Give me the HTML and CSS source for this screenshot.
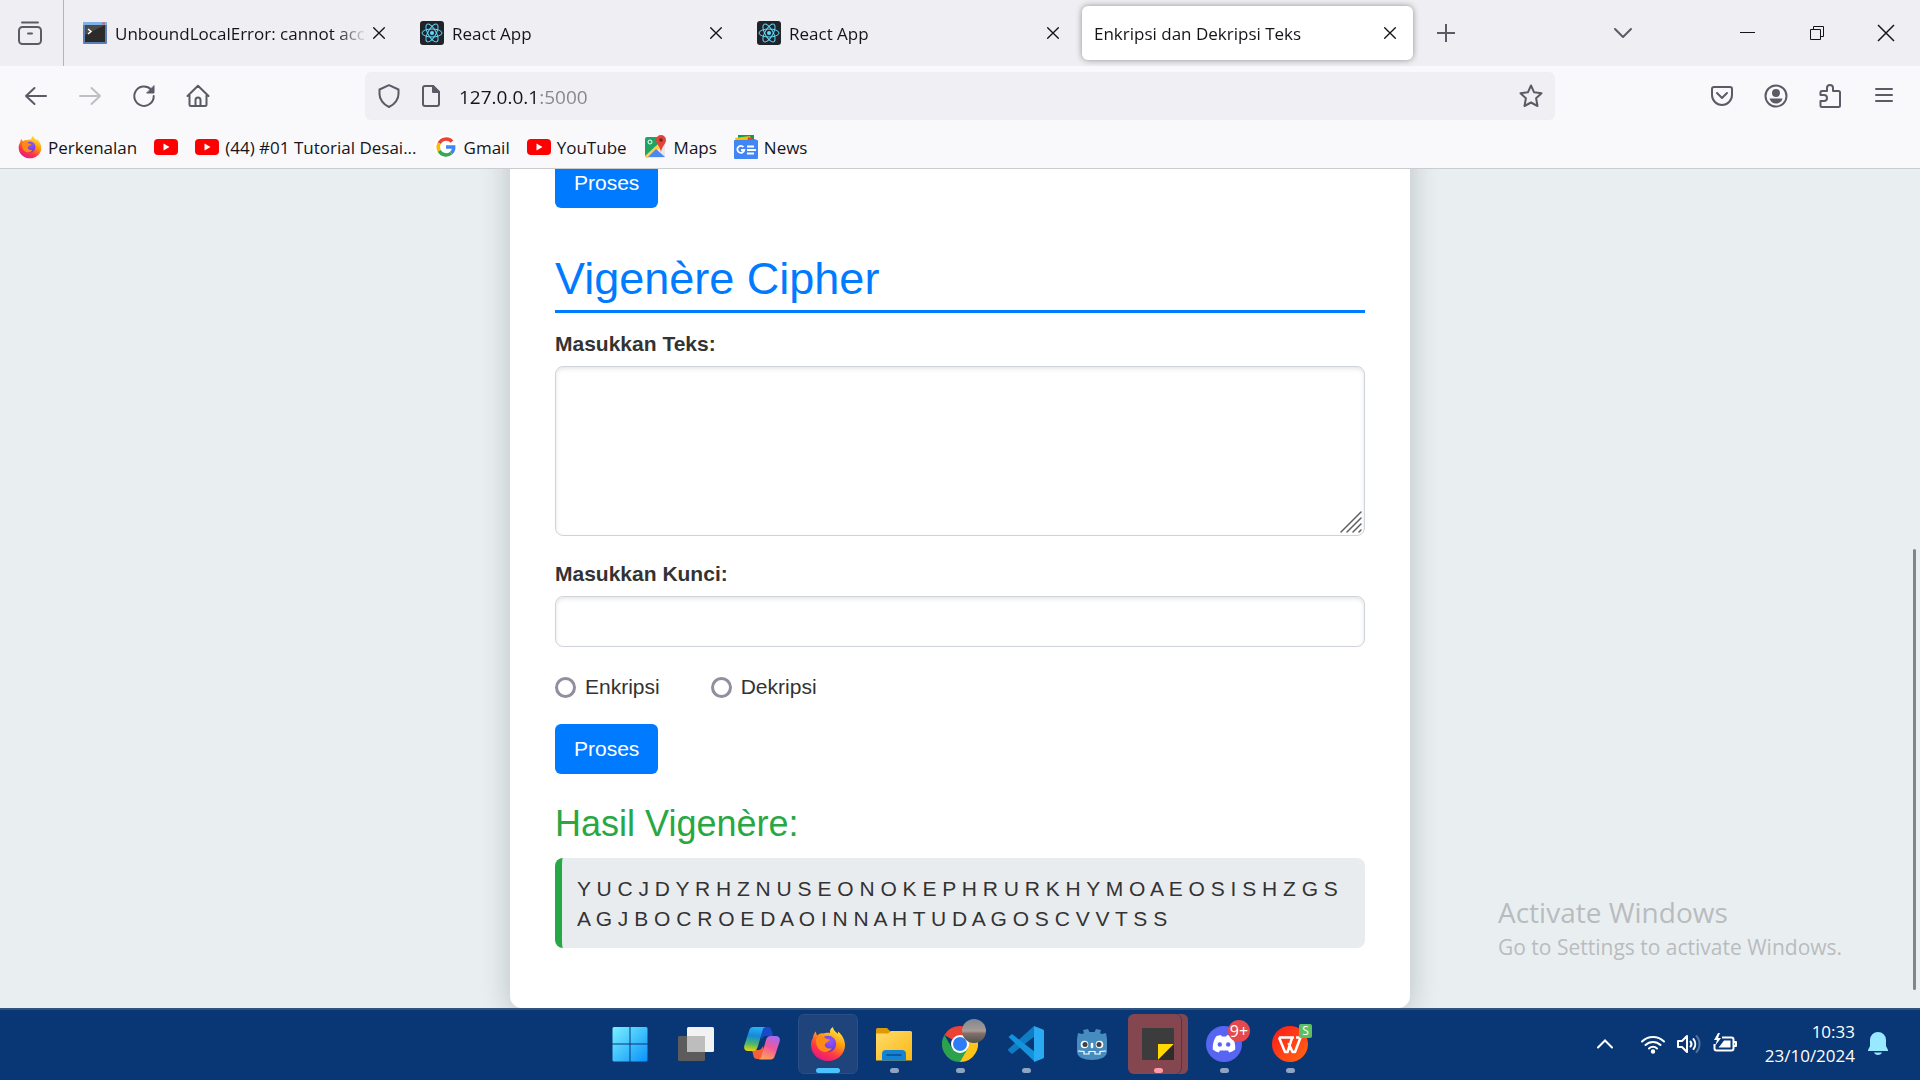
FILE: index.html
```html
<!DOCTYPE html>
<html lang="id">
<head>
<meta charset="utf-8">
<title>Enkripsi dan Dekripsi Teks</title>
<link rel="stylesheet" href="styles.css">
</head>
<body>
<svg class="defs" aria-hidden="true">
  <defs>
    <linearGradient id="fxBody" x1="0.8" y1="0" x2="0.25" y2="1"><stop offset="0" stop-color="#fff44f"/><stop offset=".4" stop-color="#ff980e"/><stop offset=".7" stop-color="#ff3647"/><stop offset="1" stop-color="#e31587"/></linearGradient>
    <radialGradient id="fxGlobe" cx=".6" cy=".3" r=".8"><stop offset="0" stop-color="#9059ff"/><stop offset=".6" stop-color="#7542e5"/><stop offset="1" stop-color="#4a2bb0"/></radialGradient>
    <linearGradient id="winBlue" gradientUnits="userSpaceOnUse" x1="0" y1="0" x2="35" y2="35"><stop offset="0" stop-color="#7df3ff"/><stop offset="1" stop-color="#0a93fa"/></linearGradient>
    <linearGradient id="copLeft" x1=".3" y1="0" x2=".2" y2="1"><stop offset="0" stop-color="#27b0f5"/><stop offset=".35" stop-color="#1489d8"/><stop offset=".7" stop-color="#4fb868"/><stop offset="1" stop-color="#f2d500"/></linearGradient>
    <linearGradient id="copRight" x1=".7" y1="0" x2=".3" y2="1"><stop offset="0" stop-color="#a46bf2"/><stop offset=".45" stop-color="#f0569c"/><stop offset="1" stop-color="#ffa255"/></linearGradient>
    <linearGradient id="folder" x1="0" y1="0" x2="1" y2="1"><stop offset="0" stop-color="#ffdc6e"/><stop offset="1" stop-color="#fbb811"/></linearGradient>
    <linearGradient id="wpsRed" x1="0" y1="0" x2="1" y2="1"><stop offset="0" stop-color="#ff1616"/><stop offset="1" stop-color="#ff6a14"/></linearGradient>
    <linearGradient id="avatar" x1="0" y1="0" x2="0" y2="1"><stop offset="0" stop-color="#7e8792"/><stop offset=".5" stop-color="#a99b95"/><stop offset=".6" stop-color="#82706a"/><stop offset="1" stop-color="#4e504f"/></linearGradient>
    <symbol id="close" viewBox="0 0 24 24"><path d="M4 4l16 16M20 4L4 20" fill="none" stroke="#15141a" stroke-width="2" stroke-linecap="round"/></symbol>
    <symbol id="react" viewBox="0 0 24 24"><rect width="24" height="24" rx="3" fill="#20232a"/><g fill="none" stroke="#61dafb" stroke-width="1"><ellipse cx="12" cy="12" rx="10" ry="4"/><ellipse cx="12" cy="12" rx="10" ry="4" transform="rotate(60 12 12)"/><ellipse cx="12" cy="12" rx="10" ry="4" transform="rotate(120 12 12)"/></g><circle cx="12" cy="12" r="2" fill="#61dafb"/></symbol>
    <symbol id="youtube" viewBox="0 0 24 24"><rect y="4" width="24" height="16" rx="4" fill="#f00"/><path d="M9.500 8.500v7l6-3.500z" fill="#fff"/></symbol>
    <symbol id="firefox" viewBox="0 0 36 36"><path d="M3 12C3 9 5 6 6 5.500c0 2 .5 3 1.500 4C9 8 11 7 13 7.500c2-.5 5-1 7-.5C19.500 4 21 2 23 1c.3 3 2 4 4 6l1 1V5.500c4 3 7 8.500 7 13.500 0 9-7.500 16-17 16S1 28 1 19c0-3 .7-5.500 2-7z" fill="url(#fxBody)"/><circle cx="18" cy="18" r="8.200" fill="url(#fxGlobe)"/><path d="M6 13c2-3 5-3.500 8-2l3 2c2 .3 2.500.5 2.500 1.200 0 1.200-3 2-4 3.200-.8 1-1 2-.2 3.200 1.200 2 3.700 2.400 6.700 1.400-2 4-7 5-10.500 3C7.500 23 5.500 18 6 13z" fill="#ff8a16"/></symbol>
  </defs>
</svg>

<header class="browser">
  <div class="tabbar">
    <button class="tool view" aria-label="Firefox View"><svg width="28" height="28" viewBox="0 0 28 28" fill="none" stroke="#5b5b66" stroke-width="2" stroke-linecap="round"><path d="M6 3.500h16"/><rect x="3" y="8" width="22" height="17" rx="3.500"/><path d="M12 14.500h4"/></svg></button>
    <div class="tabs" role="tablist">
      <div class="tab" role="tab"><svg class="fav" viewBox="0 0 24 24"><rect y="1" width="24" height="22" rx="1" fill="#5a7fb4"/><rect y="1" width="24" height="3" fill="#7fb0e8"/><rect x="2" y="4" width="20" height="17" fill="#2b2b2b"/><path d="M2 4h20L2 14z" fill="#4a4a4a"/><path d="M5 8l3 2.500L5 13" fill="none" stroke="#fff" stroke-width="1.500"/><rect x="19" y="1.500" width="3" height="2" fill="#d86a5c"/></svg><span class="tab-title">UnboundLocalError: cannot acce</span><button class="tab-close" aria-label="Close tab"><svg><use href="#close"/></svg></button></div>
      <div class="tab" role="tab"><svg class="fav"><use href="#react"/></svg><span class="tab-title">React App</span><button class="tab-close" aria-label="Close tab"><svg><use href="#close"/></svg></button></div>
      <div class="tab" role="tab"><svg class="fav"><use href="#react"/></svg><span class="tab-title">React App</span><button class="tab-close" aria-label="Close tab"><svg><use href="#close"/></svg></button></div>
      <div class="tab active" role="tab" aria-selected="true"><span class="tab-title">Enkripsi dan Dekripsi Teks</span><button class="tab-close" aria-label="Close tab"><svg><use href="#close"/></svg></button></div>
    </div>
    <button class="tool newtab" aria-label="New tab"><svg width="24" height="24" viewBox="0 0 24 24" stroke="#5b5b66" stroke-width="2"><path d="M12 3v18M3 12h18"/></svg></button>
    <button class="tool alltabs" aria-label="List all tabs"><svg width="24" height="24" viewBox="0 0 24 24" fill="none" stroke="#5b5b66" stroke-width="2" stroke-linecap="round" stroke-linejoin="round"><path d="M4 8l8 8 8-8"/></svg></button>
    <div class="window-buttons">
      <button class="tool" aria-label="Minimize"><svg width="20" height="20" viewBox="0 0 20 20"><path d="M2 9.500h15" stroke="#15141a"/></svg></button>
      <button class="tool" aria-label="Restore"><svg width="20" height="20" viewBox="0 0 20 20" fill="none" stroke="#15141a"><path d="M3.500 6.500h10v10h-10zM6.500 6.500v-3h10v10h-3"/></svg></button>
      <button class="tool" aria-label="Close"><svg width="20" height="20" viewBox="0 0 20 20" stroke="#15141a" stroke-width="1.500"><path d="M2 2l16 16M18 2L2 18"/></svg></button>
    </div>
  </div>

  <div class="navbar">
    <div class="nav-left">
      <button class="tool" aria-label="Back"><svg width="24" height="24" viewBox="0 0 24 24" fill="none" stroke="#5b5b66" stroke-width="2" stroke-linecap="round" stroke-linejoin="round"><path d="M22 12H2M10.500 4L2 12l8.500 8"/></svg></button>
      <button class="tool" aria-label="Forward" disabled><svg width="24" height="24" viewBox="0 0 24 24" fill="none" stroke="#bfbfc4" stroke-width="2" stroke-linecap="round" stroke-linejoin="round"><path d="M2 12h20M13.500 4l8.500 8-8.500 8"/></svg></button>
      <button class="tool" aria-label="Reload"><svg width="24" height="24" viewBox="0 0 24 24" fill="none" stroke="#5b5b66" stroke-width="2" stroke-linecap="round"><path d="M19 5.500A9.700 9.700 0 1 0 21.700 12"/><path d="M22 2v7h-7z" fill="#5b5b66" stroke-width="1"/></svg></button>
      <button class="tool" aria-label="Home"><svg width="24" height="24" viewBox="0 0 24 24" fill="none" stroke="#5b5b66" stroke-width="2" stroke-linecap="round" stroke-linejoin="round"><path d="M1.500 12L12 1.800 22.500 12M3.500 11v9.500a1.500 1.500 0 0 0 1.500 1.500h14a1.500 1.500 0 0 0 1.500-1.500V11M9.500 21.500V16a2.500 2.500 0 0 1 5 0v5.500"/></svg></button>
    </div>
    <div class="urlbar">
      <svg width="24" height="24" viewBox="0 0 24 24" fill="none" stroke="#5b5b66" stroke-width="2" stroke-linejoin="round"><path d="M12 1.200l9.500 4.300v4.500c0 5-3.500 10.500-9.500 13-6-2.500-9.500-8-9.500-13V5.500z"/></svg>
      <svg width="24" height="24" viewBox="0 0 24 24" fill="none" stroke="#5b5b66" stroke-width="2" stroke-linejoin="round"><path d="M14 2H6a2 2 0 0 0-2 2v16a2 2 0 0 0 2 2h12a2 2 0 0 0 2-2V8z"/><path d="M14 2v6h6z" fill="#5b5b66"/></svg>
      <input class="address" type="text" value="127.0.0.1:5000" aria-label="Address">
      <button class="tool" aria-label="Bookmark this page"><svg width="24" height="24" viewBox="0 0 24 24" fill="none" stroke="#5b5b66" stroke-width="2" stroke-linejoin="round"><path d="M12 1.500l3.100 6.800 7.400.9-5.400 5.100 1.400 7.700L12 18.500 5.500 22l1.400-7.700L1.500 9.200l7.400-.9z"/></svg></button>
    </div>
    <div class="nav-right">
      <button class="tool" aria-label="Pocket"><svg width="24" height="24" viewBox="0 0 24 24" fill="none" stroke="#5b5b66" stroke-width="2" stroke-linecap="round" stroke-linejoin="round"><path d="M4 3h16a2 2 0 0 1 2 2v6a10 10 0 0 1-20 0V5a2 2 0 0 1 2-2z"/><path d="M7 9l5 5 5-5"/></svg></button>
      <button class="tool" aria-label="Account"><svg width="24" height="24" viewBox="0 0 24 24" fill="#5b5b66"><circle cx="12" cy="12" r="10.500" fill="none" stroke="#5b5b66" stroke-width="2"/><circle cx="12" cy="9" r="4"/><path d="M5.500 14.500h13c-.8 3-3.300 5-6.500 5s-5.700-2-6.500-5z"/></svg></button>
      <button class="tool" aria-label="Extensions"><svg width="24" height="24" viewBox="0 0 24 24" fill="none" stroke="#5b5b66" stroke-width="2" stroke-linejoin="round"><path d="M9 7V4a3 3 0 0 1 6 0v3h5.500a1.500 1.500 0 0 1 1.500 1.500v13a1.500 1.500 0 0 1-1.500 1.500H4a1.500 1.500 0 0 1-1.500-1.500V17H6a3 3 0 0 0 0-6H2.500V8.500A1.500 1.500 0 0 1 4 7z"/></svg></button>
      <button class="tool" aria-label="Menu"><svg width="24" height="24" viewBox="0 0 24 24" stroke="#5b5b66" stroke-width="2" stroke-linecap="round"><path d="M4 5h16M4 11h16M4 17h16"/></svg></button>
    </div>
  </div>

  <nav class="bookmarks">
    <a href="#"><svg><use href="#firefox"/></svg>Perkenalan</a>
    <a href="#" aria-label="YouTube"><svg><use href="#youtube"/></svg></a>
    <a href="#"><svg><use href="#youtube"/></svg>(44) #01 Tutorial Desai...</a>
    <a href="#"><svg viewBox="0 0 24 24"><circle cx="12" cy="12" r="12" fill="#fff"/><g fill="none" stroke-width="3.500"><path d="M18 6.700A7.800 7.800 0 0 0 5.200 8.300" stroke="#ea4335"/><path d="M5.200 8.300a7.800 7.800 0 0 0 0 7.500" stroke="#fbbc05"/><path d="M5.200 15.800a7.800 7.800 0 0 0 12 2.200" stroke="#34a853"/><path d="M17.200 18a7.500 7.500 0 0 0 2.500-6H12" stroke="#4285f4"/></g></svg>Gmail</a>
    <a href="#"><svg><use href="#youtube"/></svg>YouTube</a>
    <a href="#"><svg viewBox="0 0 24 24"><path d="M2 3h14l5 7v11a2 2 0 0 1-2 2H2z" fill="#e8e8e8"/><path d="M1 4a2 2 0 0 1 2-2h11l3 7L2 22a2 2 0 0 1-1-2z" fill="#1fa463"/><path d="M14 9l3 3L4 23H3a2 2 0 0 1-2-2z" fill="#ffd04b"/><path d="M12 14l9 8H4z" fill="#4a89f3"/><circle cx="6" cy="7" r="2" fill="none" stroke="#fff"/><path d="M17 0a5 5 0 0 1 5 5c0 4-4 6-5 12-1-6-5-8-5-12a5 5 0 0 1 5-5z" fill="#e0443a"/><circle cx="17" cy="5" r="1.800" fill="#7b231e"/></svg>Maps</a>
    <a href="#"><svg viewBox="0 0 24 24"><path d="M4 0h16v7H4z" fill="#0c9d58"/><path d="M1 3l15-2 2 6H2z" fill="#fbbc04"/><path d="M14 2l9 3-2 5h-8z" fill="#ea4335"/><rect y="5" width="24" height="19" rx="1" fill="#4285f4"/><path d="M9.500 12a3.500 3.500 0 1 0 .8 3H7M13 11.500h7M13 15h9M13 18.500h7" stroke="#fff" stroke-width="1.800" fill="none"/></svg>News</a>
  </nav>
</header>

<main class="page">
  <div class="card">
    <form class="form">
      <button class="btn" type="button">Proses</button>
    </form>
    <h2>Vigenère Cipher</h2>
    <form class="form">
      <label class="field-label" for="teks">Masukkan Teks:</label>
      <div class="area-wrap">
        <textarea class="control area" id="teks"></textarea>
        <svg class="grip" viewBox="0 0 24 24" stroke="#5f5f5f" stroke-width="1.500" stroke-linecap="round"><path d="M2 22L22 2M8 22L22 8M14 22l8-8M20 22l2-2"/></svg>
      </div>
      <label class="field-label" for="kunci">Masukkan Kunci:</label>
      <input class="control line" id="kunci" type="text">
      <div class="choices">
        <label class="choice"><input type="radio" name="mode" value="enkripsi">Enkripsi</label>
        <label class="choice"><input type="radio" name="mode" value="dekripsi">Dekripsi</label>
      </div>
      <button class="btn" type="button">Proses</button>
    </form>
    <h3>Hasil Vigenère:</h3>
    <p class="result">Y U C J D Y R H Z N U S E O N O K E P H R U R K H Y M O A E O S I S H Z G S A G J B O C R O E D A O I N N A H T U D A G O S C V V T S S</p>
  </div>
  <div class="scroll-thumb"></div>
  <div class="watermark"><p class="wm-title">Activate Windows</p><p class="wm-text">Go to Settings to activate Windows.</p></div>
</main>

<footer class="taskbar">
  <div class="apps">
    <button class="app" aria-label="Start"><svg viewBox="0 0 36 36" fill="url(#winBlue)"><path d="M2 1h15.500v16.500H.5V2.500A1.500 1.500 0 0 1 2 1zM18.500 1H34a1.500 1.500 0 0 1 1.500 1.500v15h-17zM.5 18.500h17v17H2A1.500 1.500 0 0 1 .5 34zM18.500 18.500h17V34a1.500 1.500 0 0 1-1.500 1.500H18.500z"/></svg></button>
    <button class="app" aria-label="Task view"><svg viewBox="0 0 36 36"><rect x="9" y="1" width="27" height="25" rx="1.500" fill="#f2f2f2"/><rect x="0" y="10" width="27" height="25" rx="1.500" fill="#5c5c5c"/><path d="M9 10h18v16H9z" fill="#bdbdbd"/></svg></button>
    <button class="app" aria-label="Copilot"><svg viewBox="0 0 36 36"><path d="M14 1h10c2 0 3 1.500 3.500 3l1.500 6h-7c-3 0-4 2-4.500 4z" fill="#1749c8"/><path d="M22 33H13c-2 0-3-1-3.500-3L8 24h6c3 0 4-2 5-4z" fill="#f4603c"/><path d="M9.500 1H22c-2 0-3 1.500-3.500 3.500L14 20c-1 3-2 5-5 5H4c-3.500 0-4.500-3-3.500-6L5 5c.8-2.500 2-4 4.500-4z" fill="url(#copLeft)"/><path d="M26.500 33.500H14c2 0 3-1.500 3.500-3.500L22 14c1-3 2-4 5-4h5c3.500 0 4.500 3 3.500 6L31 29.500c-.8 2.500-2 4-4.500 4z" fill="url(#copRight)"/></svg></button>
    <button class="app current" aria-label="Firefox"><svg><use href="#firefox"/></svg><i class="mark"></i></button>
    <button class="app" aria-label="File Explorer"><svg viewBox="0 0 36 36"><path d="M0 3.500A1.500 1.500 0 0 1 1.500 2H11l4 4-3 4H0z" fill="#dd9a05"/><path d="M0 7.500h12L15 5h19.500A1.500 1.500 0 0 1 36 6.500v28H0z" fill="url(#folder)"/><path d="M6 34.500V28a4 4 0 0 1 4-4h16a4 4 0 0 1 4 4v6.500z" fill="#1583d5"/><path d="M11 29h14" stroke="#0b4c8c" stroke-width="1.500" stroke-linecap="round"/></svg><i class="mark"></i></button>
    <button class="app" aria-label="Chrome"><svg viewBox="0 0 36 36"><path d="M18 18L2.400 9A18 18 0 0 1 33.600 9z" fill="#ea4335"/><path d="M18 18V9h15.600A18 18 0 0 1 18 36z" fill="#fcc419"/><path d="M18 36A18 18 0 0 1 2.400 9l7.800 13.500L18 18l7.800 4.500z" fill="#2ba24c"/><circle cx="18" cy="18" r="9" fill="#fff"/><circle cx="18" cy="18" r="7" fill="#2f7df6"/></svg><svg class="badge" viewBox="0 0 24 24"><circle cx="12" cy="12" r="12" fill="url(#avatar)"/></svg><i class="mark"></i></button>
    <button class="app" aria-label="Visual Studio Code"><svg viewBox="0 0 36 36"><path d="M26 0l1 10L4 28l-3.500-3a1.500 1.500 0 0 1 0-2z" fill="#0f7dc4"/><path d="M.5 11L4 8l23 18v10z" fill="#1493dd"/><path d="M26 0l9 3.500a2 2 0 0 1 1 1.500v26a2 2 0 0 1-1 1.500L26 36z" fill="#2aaaf3"/></svg><i class="mark"></i></button>
    <button class="app" aria-label="Godot"><svg viewBox="0 0 36 36"><path d="M3 13l1-6 4 1 2-1-1-3 5-1 1.500 3h5L22 3l5 1-1 3 2 1 4-1 1 6v13c0 5-7 8-15 8S3 31 3 26z" fill="#478cbf"/><path d="M4 25l6 .5V28h5v-2.500h6V28h5v-2.500l6-.5" fill="none" stroke="#fff" stroke-width="1.200"/><circle cx="10.500" cy="18.500" r="3.800" fill="#fff"/><circle cx="25.500" cy="18.500" r="3.800" fill="#fff"/><circle cx="11" cy="18.500" r="2.500" fill="#414042"/><circle cx="25" cy="18.500" r="2.500" fill="#414042"/><path d="M18 18v3" stroke="#fff" stroke-width="2.500" stroke-linecap="round"/></svg></button>
    <button class="app alert" aria-label="Sticky Notes"><svg viewBox="0 0 36 36"><rect x="2" y="2" width="32" height="32" rx="1" fill="#3c3c3c"/><path d="M18 18h16L18 34z" fill="#ffd900"/><path d="M34 18v16H18z" fill="#2c2c2c"/></svg><i class="mark"></i></button>
    <button class="app" aria-label="Discord"><svg viewBox="0 0 36 36"><circle cx="18" cy="18" r="18" fill="#5865f2"/><path d="M10 10.500c2-1 3.500-1.300 5-1.500l.8 1.500h4.400L21 9c1.500.2 3 .5 5 1.500 2.500 4 3.600 8.500 3.200 13-2 1.500-4 2.500-6 3L22 24.500h-8l-1.200 2c-2-.5-4-1.500-6-3-.4-4.500.7-9 3.200-13z" fill="#fff"/><circle cx="13.800" cy="18.500" r="2.200" fill="#5865f2"/><circle cx="22.200" cy="18.500" r="2.200" fill="#5865f2"/></svg><span class="badge count">9+</span><i class="mark"></i></button>
    <button class="app" aria-label="WPS Office"><svg viewBox="0 0 36 36"><circle cx="18" cy="18" r="18" fill="url(#wpsRed)"/><path d="M7 11.500h15M7 11.500L13 26h2.500L20 12M16.500 17l4 9H23l5.500-14.500H24" fill="none" stroke="#fff" stroke-width="2.500" stroke-linejoin="round"/></svg><span class="badge sheet">S</span><i class="mark"></i></button>
  </div>
  <div class="tray">
    <button class="tool" aria-label="Hidden icons"><svg width="24" height="24" viewBox="0 0 24 24" fill="none" stroke="#fff" stroke-width="2" stroke-linecap="round"><path d="M5 15.500L12 8.500l7 7"/></svg></button>
    <button class="tool quick" aria-label="Quick settings">
      <svg width="24" height="24" viewBox="0 0 24 24" fill="none" stroke="#fff" stroke-width="2" stroke-linecap="round"><path d="M1 9.500a15.500 15.500 0 0 1 22 0M4.500 13a10.600 10.600 0 0 1 15 0M8 16.500a5.700 5.700 0 0 1 8 0"/><circle cx="12" cy="19.500" r="1.200" fill="#fff"/></svg>
      <svg width="24" height="24" viewBox="0 0 24 24" fill="none" stroke="#fff" stroke-width="2" stroke-linecap="round" stroke-linejoin="round"><path d="M1 9v6h4l5 5V4L5 9z"/><path d="M13.500 9.500a4 4 0 0 1 0 5M16.500 7a8 8 0 0 1 0 10"/><path d="M19.500 4a12 12 0 0 1 0 16" stroke="#52709b"/></svg>
      <svg width="24" height="24" viewBox="0 0 24 24" fill="none" stroke="#fff" stroke-width="2" stroke-linejoin="round"><path d="M9 5.500h9.500a2 2 0 0 1 2 2v9a2 2 0 0 1-2 2H3.500a2 2 0 0 1-2-2V12M21 10h2v4h-2"/><path d="M11 8.500h6.500v7h-12l2.500-3z" fill="#fff" stroke="none"/><path d="M5 1L1 8h3l-2 6 6-8H5l2-5z" fill="#fff" stroke="none"/></svg>
    </button>
    <button class="tool clock"><span>10:33</span><span>23/10/2024</span></button>
    <button class="tool" aria-label="Notifications"><svg width="24" height="24" viewBox="0 0 24 24" fill="#98e8ff"><path d="M12 0a8 8 0 0 1 8 8v6l2 4v1H2v-1l2-4V8a8 8 0 0 1 8-8zM8 20.500h8c-.5 1.500-2 2.500-4 2.500s-3.500-1-4-2.500z"/></svg></button>
  </div>
</footer>
</body>
</html>
```
FILE: styles.css
```css
* { box-sizing: border-box; }

body {
  margin: 0;
  height: 100vh;
  display: flex;
  flex-direction: column;
  overflow: hidden;
  font-family: "Open Sans", "Noto Sans", sans-serif;
  font-size: 17px;
  color: #15141a;
}

svg { display: block; flex: none; }
.defs { position: absolute; width: 0; height: 0; }
h2, h3, p { margin: 0; font-weight: 400; }

button, input, textarea { font: inherit; color: inherit; }

.tool {
  display: flex;
  align-items: center;
  justify-content: center;
  padding: 0;
  border: 0;
  background: none;
}

/* Browser chrome */
.browser {
  flex: none;
  background: #f9f9fb;
  border-bottom: 1px solid #ccc;
}

.tabbar {
  display: flex;
  height: 66px;
  background: #efeef3;
}

.view {
  width: 64px;
  padding-right: 4px;
  border-right: 1px solid #b4b4bb;
}

.tabs {
  display: flex;
  gap: 6px;
  padding: 6px 7px;
}

.tab {
  display: flex;
  align-items: center;
  width: 331px;
  padding: 0 11px 0 12px;
  border-radius: 6px;
}

.tab.active {
  background: #fff;
  box-shadow: 0 0 6px rgba(0, 0, 0, .4);
}

.fav { width: 24px; height: 24px; margin-right: 8px; }

.tab-title {
  flex: 1;
  min-width: 0;
  overflow: hidden;
  white-space: nowrap;
  mask-image: linear-gradient(to left, transparent, #000 30px);
}

.tab-close {
  width: 24px;
  height: 24px;
  padding: 4px;
  border: 0;
  background: none;
}

.tab-close svg { width: 16px; height: 16px; }

.newtab { width: 52px; }
.alltabs { width: 48px; margin-left: auto; }
.window-buttons { display: flex; margin-left: 66px; }
.window-buttons .tool { width: 69px; }

.navbar {
  display: flex;
  align-items: center;
  padding-top: 6px;
}

.nav-left {
  display: flex;
  gap: 30px;
  width: 365px;
  padding-left: 24px;
}

.urlbar {
  flex: 1;
  display: flex;
  align-items: center;
  gap: 18px;
  height: 48px;
  padding: 0 12px;
  border-radius: 6px;
  background: #f0eff4;
}

.address {
  flex: 1;
  min-width: 0;
  height: 28px;
  padding: 2px 0 0;
  margin-left: -2px;
  border: 0;
  outline: 0;
  font-size: 19px;
  background: linear-gradient(to right, #15141a 81px, #85858c 81px);
  background-clip: text;
  -webkit-text-fill-color: transparent;
}

.nav-right {
  display: flex;
  justify-content: flex-end;
  gap: 30px;
  width: 365px;
  padding-right: 24px;
}

.bookmarks {
  display: flex;
  align-items: center;
  gap: 17px;
  height: 48px;
  padding: 6px 18px 0;
}

.bookmarks a {
  display: flex;
  align-items: center;
  gap: 6px;
  color: inherit;
  text-decoration: none;
  white-space: nowrap;
}

.bookmarks svg { width: 24px; height: 24px; }

/* Page, scrolled to its end */
.page {
  position: relative;
  flex: 1;
  min-height: 0;
  display: flex;
  flex-direction: column;
  justify-content: flex-end;
  align-items: center;
  overflow: hidden;
  background: #e9eff1;
  font-family: "Liberation Sans", Arial, sans-serif;
  font-size: 21px;
  line-height: 30px;
  color: #333;
}

.card {
  flex: none;
  width: 900px;
  max-width: 100%;
  padding: 45px;
  border-radius: 12px;
  background: #fff;
  box-shadow: 0 6px 30px rgba(0, 0, 0, .2);
}

.btn {
  display: block;
  height: 50px;
  padding: 0 19px;
  border: 0;
  border-radius: 6px;
  background: #007bff;
  color: #fff;
}

h2 {
  margin: 46px 0 16px;
  padding-bottom: 6px;
  border-bottom: 3px solid #007bff;
  font-size: 45px;
  line-height: 50px;
  color: #007bff;
}

.field-label {
  display: block;
  margin-bottom: 7px;
  font-weight: 700;
}

.control {
  display: block;
  width: 100%;
  border: 1px solid #ced4da;
  border-radius: 8px;
  background: #fff;
  box-shadow: inset 0 2px 4px rgba(0, 0, 0, .1);
  outline: 0;
}

.area-wrap { position: relative; margin-bottom: 23px; }
.area { height: 170px; resize: none; }
.grip { position: absolute; right: 2px; bottom: 2px; width: 24px; height: 24px; }
.line { height: 51px; }

.choices {
  display: flex;
  gap: 51px;
  margin: 25px 0 22px;
}

.choice { display: flex; align-items: center; gap: 9px; }

.choice input {
  appearance: none;
  width: 21px;
  height: 21px;
  margin: 0;
  border: 3px solid #8f8f9d;
  border-radius: 50%;
  background: #fff;
}

h3 {
  margin: 30px 0 14px;
  font-size: 36px;
  line-height: 40px;
  color: #28a745;
}

.result {
  margin-bottom: 15px;
  padding: 16px 15px 14px;
  border-left: 7px solid #28a745;
  border-radius: 8px;
  background: #e9ecef;
}

.scroll-thumb {
  position: absolute;
  right: 4px;
  bottom: 18px;
  width: 3px;
  height: 441px;
  border-radius: 2px;
  background: #858585;
}

.watermark {
  position: absolute;
  right: 78px;
  bottom: 45px;
  width: 344px;
  font-family: "Open Sans", "Noto Sans", sans-serif;
  color: #b9bcbe;
  white-space: nowrap;
}

.wm-title { font-size: 28px; line-height: 38px; }
.wm-text { font-size: 21px; line-height: 32px; }

/* Taskbar */
.taskbar {
  position: relative;
  flex: none;
  display: flex;
  align-items: center;
  justify-content: center;
  height: 72px;
  box-shadow: inset 0 2px #2f527f;
  background: #093775;
  color: #fff;
}

.apps { display: flex; gap: 6px; }

.app {
  position: relative;
  display: flex;
  align-items: center;
  justify-content: center;
  width: 60px;
  height: 60px;
  padding: 0;
  border: 0;
  border-radius: 6px;
  background: none;
}

.app svg { width: 36px; height: 36px; }
.app.current { border: 1px solid #2a4f85; background: #1f437b; }
.app.alert { background: #84474f; box-shadow: inset -6px 0 #84474f, inset -7px 0 #3c3e62; }

.mark {
  position: absolute;
  bottom: 1px;
  left: 50%;
  width: 9px;
  height: 5px;
  margin-left: -4px;
  border-radius: 3px;
  background: #8fa4c2;
}

.current .mark { bottom: 0; width: 24px; margin-left: -12px; background: #4cc2ff; }
.alert .mark { background: #ff9ba4; }

.app .badge { position: absolute; top: 5px; right: 4px; width: 24px; height: 24px; }

.app .count {
  top: 6px;
  width: 22px;
  height: 22px;
  border-radius: 50%;
  background: #e5484d;
  color: #fff;
  font-size: 16px;
  line-height: 22px;
}

.app .sheet {
  top: 10px;
  right: 8px;
  width: 13px;
  height: 14px;
  border-radius: 2px;
  background: #5cc063;
  color: #fff;
  font-size: 12px;
  line-height: 14px;
}

.tray {
  position: absolute;
  right: 30px;
  display: flex;
  align-items: center;
}

.quick { gap: 12px; margin: 0 28px 0 24px; }

.clock {
  flex-direction: column;
  align-items: flex-end;
  margin-right: 11px;
  font-size: 17px;
  line-height: 24px;
}
```
